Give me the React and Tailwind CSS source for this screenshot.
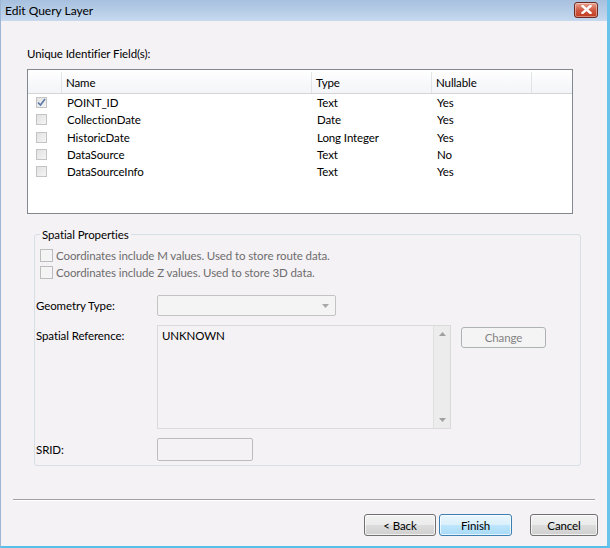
import React from 'react';

const fields = [
    { name: 'POINT_ID', type: 'Text', nullable: 'Yes', checked: true },
    { name: 'CollectionDate', type: 'Date', nullable: 'Yes' },
    { name: 'HistoricDate', type: 'Long Integer', nullable: 'Yes' },
    { name: 'DataSource', type: 'Text', nullable: 'No' },
    { name: 'DataSourceInfo', type: 'Text', nullable: 'Yes' },
];

function SmallCheck({ checked }) {
    return (
        <div className="w-[11px] h-[11px] border border-[#c4c4c4] bg-gradient-to-br from-[#e2e2e2] to-[#f4f4f4] flex items-center justify-center">
            {checked && (
                <svg width="9" height="9" viewBox="0 0 9 9">
                    <path d="M1 4.5 L3.5 7 L8 1" fill="none" stroke="#5d7aa8" strokeWidth="1.6" />
                </svg>
            )}
        </div>
    );
}

function WinButton({ children, primary, className = '' }) {
    const look = primary
        ? 'border-[#3c7fb1] bg-[linear-gradient(#eaf6fd_0%,#d9f0fc_50%,#bee6fd_50%,#a7d9f5_100%)]'
        : 'border-[#707070] bg-[linear-gradient(#f2f2f2_0%,#ebebeb_50%,#dddddd_50%,#cfcfcf_100%)]';
    return (
        <div className={`h-[22px] rounded-[3px] border flex items-center justify-center text-black shadow-[inset_0_0_0_1px_rgba(255,255,255,0.7)] ${look} ${className}`}>
            {children}
        </div>
    );
}

export default function App() {
    return (
        <div
            className="w-[610px] h-[548px] overflow-hidden bg-[#f5f2f5] text-[11.5px] tracking-[-0.1px] leading-[15px] text-black border-l border-[#9db6d3] border-r-[3px] border-r-[#6ac3ea] border-b-[2px] border-b-[#56c0ea] flex flex-col"
            style={{ fontFamily: 'Lato, "Noto Sans", sans-serif' }}
        >
            {/* title bar */}
            <div className="h-[21px] shrink-0 bg-gradient-to-b from-[#a6c0de] to-[#c6d9ef] flex items-center justify-between pl-[4px] pr-[9px]">
                <span className="text-[12px] tracking-normal">Edit Query Layer</span>
                <div className="w-[24px] h-[16px] mt-[-2px] rounded-[3px] border border-[#6d2a20] bg-gradient-to-b from-[#e8a493] via-[#cf5a42] to-[#c23a1e] flex items-center justify-center shadow-[inset_0_0_0_1px_rgba(255,255,255,0.4)]">
                    <svg width="11" height="9" viewBox="0 0 11 9">
                        <path d="M1.5 1 L9.5 8 M9.5 1 L1.5 8" stroke="#fff" strokeWidth="2.4" strokeLinecap="square" />
                    </svg>
                </div>
            </div>

            <div className="flex flex-col pl-[26px]">
                <div className="mt-[25px]">Unique Identifier Field(s):</div>

                {/* field list */}
                <div className="mt-[8px] w-[546px] h-[145px] border border-[#828790] bg-white">
                    <div className="h-[24px] flex bg-gradient-to-b from-white to-[#f2f4f8] border-b border-[#d5d5d5] pt-[2px]">
                        <div className="w-[34px] border-r border-[#e2e4e8]" />
                        <div className="w-[250px] border-r border-[#e2e4e8] pl-[4px] flex items-center">Name</div>
                        <div className="w-[120px] border-r border-[#e2e4e8] pl-[4px] flex items-center">Type</div>
                        <div className="w-[100px] border-r border-[#e2e4e8] pl-[4px] flex items-center">Nullable</div>
                        <div className="flex-1" />
                    </div>
                    <div>
                        {fields.map((f) => (
                            <div key={f.name} className="h-[17.25px] flex items-center">
                                <div className="w-[34px] pl-[8px]">
                                    <SmallCheck checked={f.checked} />
                                </div>
                                <div className="w-[250px] pl-[5px]">{f.name}</div>
                                <div className="w-[120px] pl-[5px]">{f.type}</div>
                                <div className="w-[100px] pl-[5px]">{f.nullable}</div>
                            </div>
                        ))}
                    </div>
                </div>

                {/* spatial properties group */}
                <div className="relative mt-[20px] ml-[7px] w-[547px] h-[232px] border border-[#d5dfe5] rounded-[3px]">
                    <span className="absolute top-[-8px] left-[5px] px-[2px] bg-[#f5f2f5]">Spatial Properties</span>

                    <div className="mt-[12px] pl-[5px] flex flex-col text-[#6d6d6d]">
                        <div className="h-[17px] flex items-center gap-[3px]">
                            <div className="w-[13px] h-[13px] border border-[#bcbcbc] bg-[#f4f4f4]" />
                            <span>Coordinates include M values. Used to store route data.</span>
                        </div>
                        <div className="h-[17px] flex items-center gap-[3px]">
                            <div className="w-[13px] h-[13px] border border-[#bcbcbc] bg-[#f4f4f4]" />
                            <span>Coordinates include Z values. Used to store 3D data.</span>
                        </div>
                    </div>

                    <div className="mt-[14px] flex items-center pl-[1px]">
                        <div className="w-[121px]">Geometry Type:</div>
                        <div className="w-[179px] h-[21px] border border-[#c3c3c3] rounded-[2px] bg-[#f4f4f4] flex items-center justify-end pr-[6px]">
                            <svg width="7" height="4" viewBox="0 0 7 4">
                                <path d="M0 0 L7 0 L3.5 4 Z" fill="#a8a8a8" />
                            </svg>
                        </div>
                    </div>

                    <div className="mt-[9px] flex items-start pl-[1px]">
                        <div className="w-[121px] mt-[3px]">Spatial Reference:</div>
                        <div className="w-[294px] h-[104px] border border-[#dadada] bg-[#f5f2f5] flex">
                            <div className="flex-1 pl-[4px] pt-[2px]">UNKNOWN</div>
                            <div className="w-[17px] bg-[#ececec] border-l border-[#e0e0e0] flex flex-col items-center justify-between py-[6px]">
                                <svg width="7" height="4" viewBox="0 0 7 4">
                                    <path d="M0 4 L7 4 L3.5 0 Z" fill="#a0a0a0" />
                                </svg>
                                <svg width="7" height="4" viewBox="0 0 7 4">
                                    <path d="M0 0 L7 0 L3.5 4 Z" fill="#a0a0a0" />
                                </svg>
                            </div>
                        </div>
                        <div className="ml-[10px] mt-[2px] w-[85px] h-[21px] border border-[#adb2b5] rounded-[3px] bg-[#f4f4f4] text-[#838383] flex items-center justify-center">
                            Change
                        </div>
                    </div>

                    <div className="mt-[9px] flex items-center pl-[1px]">
                        <div className="w-[121px]">SRID:</div>
                        <div className="w-[96px] h-[23px] border border-[#bdbdbd] rounded-[2px] bg-[#f5f2f5]" />
                    </div>
                </div>
            </div>

            {/* separator */}
            <div className="mt-[33px] mx-[12px] border-t border-[#a0a0a0] border-b border-b-white" />

            <div className="mt-[13px] flex justify-end pr-[9px]">
                <WinButton className="w-[72px]">&lt; Back</WinButton>
                <WinButton primary className="w-[73px] ml-[3px]">Finish</WinButton>
                <WinButton className="w-[68px] ml-[18px]">Cancel</WinButton>
            </div>
        </div>
    );
}
